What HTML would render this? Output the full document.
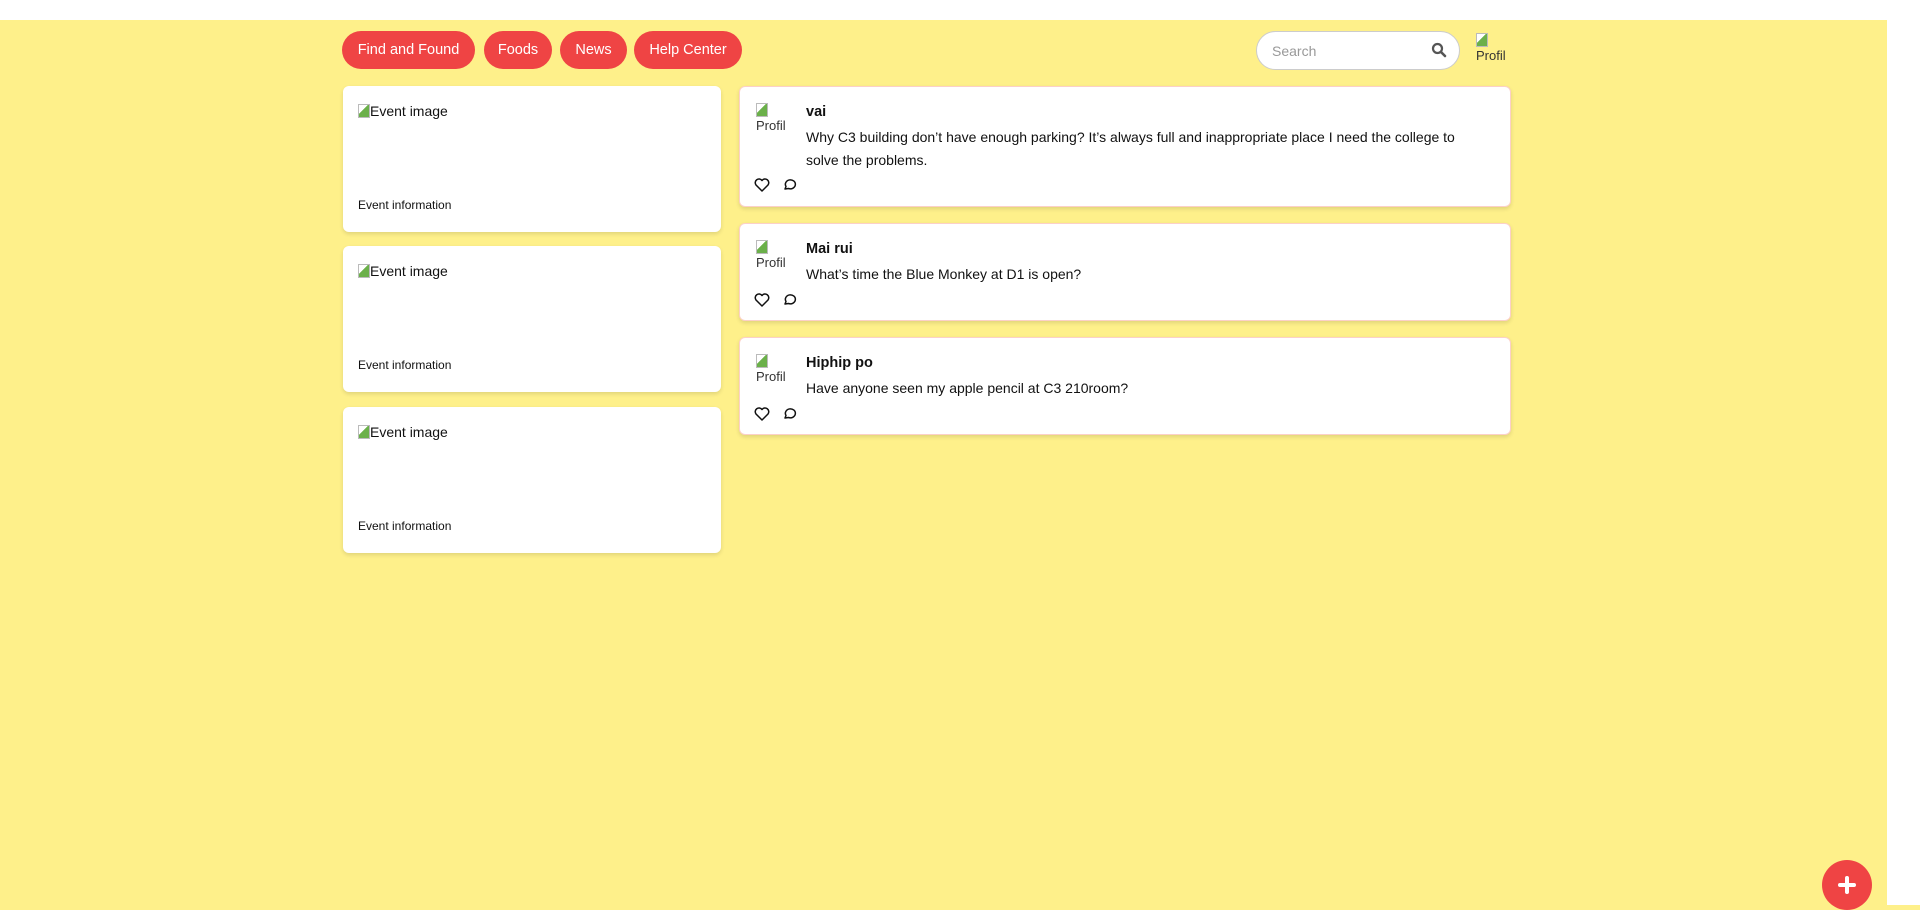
<!DOCTYPE html>
<html><head><meta charset="utf-8"><style>
*{box-sizing:border-box;margin:0;padding:0}
body{width:1920px;height:905px;overflow:hidden;background:#fef08a;font-family:"Liberation Sans",sans-serif;color:#111;position:relative}
.top{position:absolute;left:0;top:0;width:1920px;height:20px;background:#fff}
.right{position:absolute;left:1887px;top:0;width:33px;height:905px;background:#fff}
.btn{position:absolute;top:31px;height:38px;border-radius:19px;background:#ef4444;color:#fff;font-size:14.5px;line-height:38px;text-align:center}
.search{position:absolute;left:1256px;top:31px;width:204px;height:39px;border-radius:20px;background:#fff;border:1px solid #ccc}
.search span{position:absolute;left:15px;top:11px;font-size:14px;color:#999}
.card{position:absolute;background:#fff;border-radius:6px;box-shadow:0 2px 4px rgba(0,0,0,.12)}
.ev{left:343px;width:378px;height:146px}
.ev .img{position:absolute;left:15px;top:17px;font-size:14px}
.ev .info{position:absolute;left:15px;top:112px;font-size:12px}
.post{left:739px;width:772px;border:1px solid #fcd0c8}
.pimg{position:absolute;font-size:13px;color:#333;width:36px;overflow:hidden;line-height:15px;white-space:nowrap}
.post .pimg{left:16px;top:16px}
.post .name{position:absolute;left:66px;top:17px;font-weight:bold;font-size:14.5px}
.post .txt{position:absolute;left:66px;top:39px;font-size:14px;line-height:23px;width:672px}
.icons{position:absolute;left:14px}
.fab{position:absolute;left:1822px;top:860px;width:50px;height:50px;border-radius:50%;background:#ef4444}
.bi{display:inline-block;width:12px;height:14px;vertical-align:-2px;background:linear-gradient(135deg,#fff 40%,#6bb04a 41%);border:1px solid #bbb}
</style></head><body>
<div class="top"></div>
<div class="btn" style="left:342px;width:133px">Find and Found</div>
<div class="btn" style="left:484px;width:68px">Foods</div>
<div class="btn" style="left:560px;width:67px">News</div>
<div class="btn" style="left:634px;width:108px">Help Center</div>
<div class="search"><span>Search</span>
<svg style="position:absolute;right:12px;top:10px" width="16" height="16" viewBox="0 0 16 16"><circle cx="6.5" cy="6.5" r="4.5" fill="none" stroke="#555" stroke-width="2.2"/><path d="M10 10l4 4" stroke="#555" stroke-width="2.6" stroke-linecap="round"/></svg></div>
<div class="pimg" style="left:1476px;top:33px;width:34px"><span class="bi"></span><br>Profil</div>

<div class="card ev" style="top:86px"><div class="img"><span class="bi"></span>Event image</div><div class="info">Event information</div></div>
<div class="card ev" style="top:246px"><div class="img"><span class="bi"></span>Event image</div><div class="info">Event information</div></div>
<div class="card ev" style="top:407px"><div class="img"><span class="bi"></span>Event image</div><div class="info">Event information</div></div>

<div class="card post" style="top:86px;height:121px"><div class="pimg"><span class="bi"></span><br>Profil</div><div class="name">vai</div><div class="txt">Why C3 building don’t have enough parking? It’s always full and inappropriate place I need the college to solve the problems.</div>
<svg class="icons" style="top:90px" width="50" height="16" viewBox="0 0 50 16"><path d="M8 14 L2 8 A3.5 3.5 0 0 1 8 3.5 A3.5 3.5 0 0 1 14 8 Z" fill="none" stroke="#111" stroke-width="1.5" stroke-linejoin="round"/><path d="M31 12 L32 9.5 A5 4.5 0 1 1 34.5 11.5 Z" fill="none" stroke="#111" stroke-width="1.5" stroke-linejoin="round"/></svg></div>
<div class="card post" style="top:223px;height:98px"><div class="pimg"><span class="bi"></span><br>Profil</div><div class="name">Mai rui</div><div class="txt">What’s time the Blue Monkey at D1 is open?</div>
<svg class="icons" style="top:68px" width="50" height="16" viewBox="0 0 50 16"><path d="M8 14 L2 8 A3.5 3.5 0 0 1 8 3.5 A3.5 3.5 0 0 1 14 8 Z" fill="none" stroke="#111" stroke-width="1.5" stroke-linejoin="round"/><path d="M31 12 L32 9.5 A5 4.5 0 1 1 34.5 11.5 Z" fill="none" stroke="#111" stroke-width="1.5" stroke-linejoin="round"/></svg></div>
<div class="card post" style="top:337px;height:98px"><div class="pimg"><span class="bi"></span><br>Profil</div><div class="name">Hiphip po</div><div class="txt">Have anyone seen my apple pencil at C3 210room?</div>
<svg class="icons" style="top:68px" width="50" height="16" viewBox="0 0 50 16"><path d="M8 14 L2 8 A3.5 3.5 0 0 1 8 3.5 A3.5 3.5 0 0 1 14 8 Z" fill="none" stroke="#111" stroke-width="1.5" stroke-linejoin="round"/><path d="M31 12 L32 9.5 A5 4.5 0 1 1 34.5 11.5 Z" fill="none" stroke="#111" stroke-width="1.5" stroke-linejoin="round"/></svg></div>

<div class="fab"><svg style="position:absolute;left:15px;top:15px" width="20" height="20" viewBox="0 0 20 20"><path d="M10 3v14M3 10h14" stroke="#fff" stroke-width="4" stroke-linecap="round"/></svg></div>
<div class="right"></div>
</body></html>
